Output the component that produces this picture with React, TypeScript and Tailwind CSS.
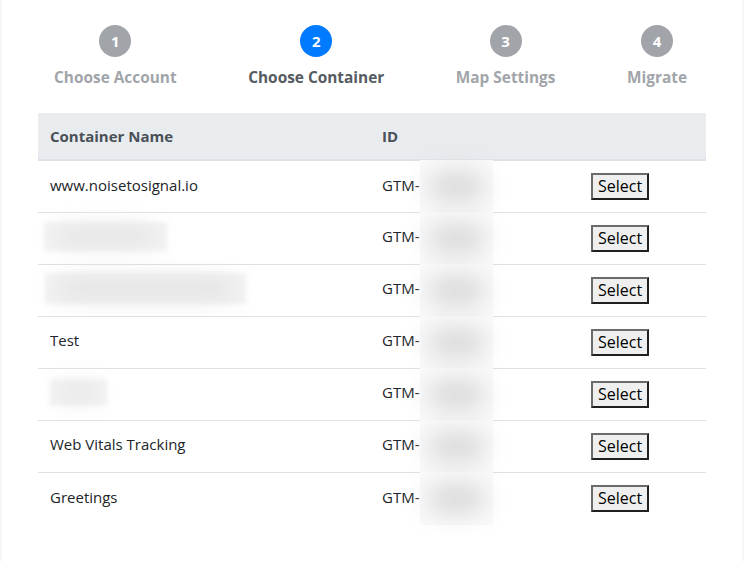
import React from 'react';

// ── Data ──────────────────────────────────────────────────────────────

const steps = [
  { n: 1, label: 'Choose Account', active: false },
  { n: 2, label: 'Choose Container', active: true },
  { n: 3, label: 'Map Settings', active: false },
  { n: 4, label: 'Migrate', active: false },
];

// blur: [width, height, offsetX] of a redacted name, or null when the name is shown
const rows: { name?: string; blur?: [number, number, number] }[] = [
  { name: 'www.noisetosignal.io' },
  { blur: [123, 29, -6] },
  { blur: [201, 31, -5] },
  { name: 'Test' },
  { blur: [57, 27, 0] },
  { name: 'Web Vitals Tracking' },
  { name: 'Greetings' },
];

function Step({ n, label, active }: { n: number; label: string; active: boolean }) {
  return (
    <div className="flex flex-col items-center">
      <div
        className={`w-8 h-8 rounded-full flex items-center justify-center text-white text-[15px] font-bold ${
          active ? 'bg-[#007bff]' : 'bg-[#a1a5aa]'
        }`}
      >
        {n}
      </div>
      <div className={`mt-[9px] text-[15.4px] font-bold leading-6 ${active ? 'text-[#555b61]' : 'text-[#a1a5aa]'}`}>
        {label}
      </div>
    </div>
  );
}

function Redacted({ w, h, x }: { w: number; h: number; x: number }) {
  return (
    <span className="relative inline-block align-middle" style={{ width: w, height: h, marginLeft: x }}>
      <span className="absolute inset-0 bg-[#f3f3f3] blur-[2px]" />
      <span className="absolute inset-x-3 inset-y-2 bg-[#dcdcdc] rounded-full blur-md" />
    </span>
  );
}

function IdCell() {
  return (
    <td className="relative px-3 pb-[3px] align-middle">
      GTM-
      <span className="absolute left-[50px] top-0 bottom-0 w-[73px] -my-px bg-[#fafafa] z-10">
        <span className="absolute inset-x-2 top-3 bottom-3 bg-[#d8d8d8] rounded-full blur-md" />
      </span>
    </td>
  );
}

export default function App() {
  return (
    <div className="w-[744px] h-[561px] bg-[#f6f6f6] flex font-['Open_Sans',sans-serif] text-[#212529]">
      <div className="ml-[2px] w-[740px] h-full bg-white px-9 pt-[25px]">
        <div className="flex justify-between pl-4 pr-[19px]">
          {steps.map((s) => (
            <Step key={s.n} {...s} />
          ))}
        </div>

        <table className="w-full mt-[23px] border-collapse text-[15px]">
          <thead>
            <tr className="bg-[#e9ecef] text-[#495057] border-b-2 border-[#dee2e6]">
              <th className="h-[47px] px-3 text-left font-bold w-[332px]">Container Name</th>
              <th className="px-3 text-left font-bold w-[209px]">ID</th>
              <th />
            </tr>
          </thead>
          <tbody>
            {rows.map((r, i) => (
              <tr key={i} className={i < rows.length - 1 ? 'border-b border-[#dee2e6]' : ''}>
                <td className="h-[52px] px-3 pb-[3px] align-middle">
                  {r.name ? r.name : <Redacted w={r.blur![0]} h={r.blur![1]} x={r.blur![2]} />}
                </td>
                <IdCell />
                <td className="px-3 align-middle">
                  <button className="h-[27px] px-[5px] text-[16px] leading-none bg-[#efefef] border-2 border-t-[#6b6b6b] border-l-[#6b6b6b] border-r-[#202020] border-b-[#202020] text-black font-['Open_Sans',sans-serif]">
                    Select
                  </button>
                </td>
              </tr>
            ))}
          </tbody>
        </table>
      </div>
      <div className="w-[2px] h-full bg-[#f6f6f6]" />
    </div>
  );
}
